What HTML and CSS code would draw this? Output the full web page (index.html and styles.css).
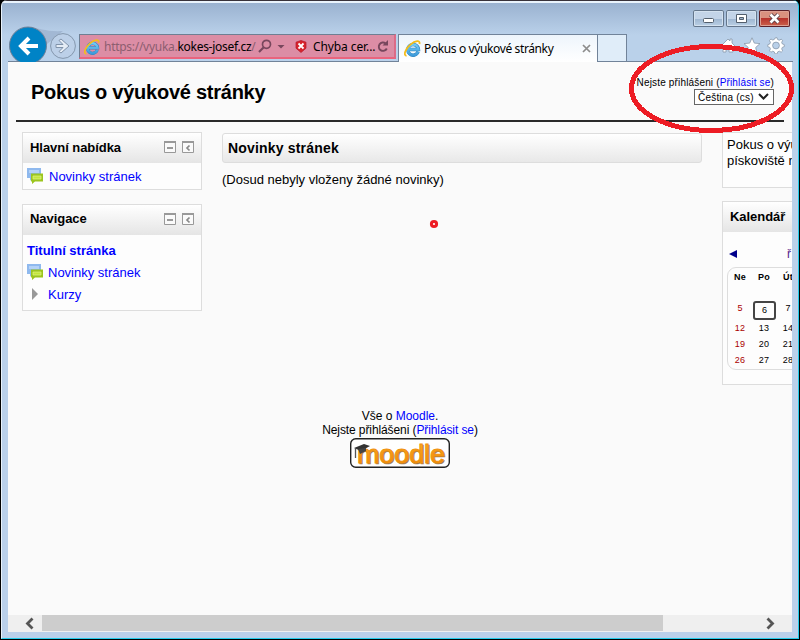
FILE: index.html
```html
<!DOCTYPE html>
<html lang="cs">
<head>
<meta charset="utf-8">
<title>Pokus o výukové stránky</title>
<link rel="stylesheet" href="styles.css">
</head>
<body>
<svg width="0" height="0" class="defs">
  <defs>
    <linearGradient id="eblue" x1="0" y1="0" x2="0" y2="1"><stop offset="0" stop-color="#72cbf5"/><stop offset="1" stop-color="#3d9bdb"/></linearGradient>
    <linearGradient id="orange" x1="0" y1="0" x2="0" y2="1"><stop offset="0" stop-color="#ffb42e"/><stop offset="1" stop-color="#ee8200"/></linearGradient>
    <symbol id="ie" viewBox="0 0 16 16">
      <path d="M13.300 11A5 5 0 1 1 13.600 8.900H4.500" fill="none" stroke="#2f83bd" stroke-width="3.200"/>
      <path d="M13.300 11A5 5 0 1 1 13.600 8.900H4.500" fill="none" stroke="url(#eblue)" stroke-width="2.400"/>
      <path d="M2.400 14.900C-1 14.500 1.200 8.400 6 4.300 10.500.3 15.600-.2 14.500 3.800" fill="none" stroke="#f3bd1c" stroke-width="1.700"/>
    </symbol>
    <symbol id="forum" viewBox="0 0 16 16">
      <path d="M0 0h14v10H5l-2 3v-3H0z" fill="#8fb9ee"/><path d="M2 2h10v3H2z" fill="#b4d2f7"/>
      <path d="M4 5.500h12v8H8l-3 2.500v-2.500H4z" fill="#9cc51e"/><path d="M6 8h8v3H6z" fill="#c3e63c" stroke="#dff28a" stroke-width=".7"/>
    </symbol>
    <symbol id="minus" viewBox="0 0 12 12"><path d="M.5.5h11v11H.5z" fill="#fafafa" stroke="#999"/><path d="M0 0h12v2H0z" fill="#999"/><path d="M3 6h6v2H3z" fill="#999"/></symbol>
    <symbol id="dock" viewBox="0 0 12 12"><path d="M.5.5h11v11H.5z" fill="#fafafa" stroke="#999"/><path d="M0 0h12v2H0z" fill="#999"/><path d="M7.500 4.500 5 7l2.500 2.500" fill="none" stroke="#888" stroke-width="1.700"/></symbol>
  </defs>
</svg>
<div class="window">
  <header class="chrome">
    <div class="nav">
      <svg width="77" height="38" viewBox="0 0 77 38">
        <path d="M28 3C39 4 45 8 62 7L46 20z" fill="#a2b8d4"/>
        <circle cx="27" cy="21.500" r="18.500" fill="#0083c6" stroke="#718096"/>
        <path d="M37 22H20M28 14l-8 8 8 8" fill="none" stroke="#fff" stroke-width="4"/>
        <circle cx="62" cy="22" r="12.400" fill="#bcd0e8" stroke="#8497ad"/>
        <path d="M55 20.500h7l-4-4 2-1.500 8 7-8 7-2-1.500 4-4h-7z" fill="#e5edf6" stroke="#8093aa"/>
      </svg>
    </div>
    <div class="address">
      <svg width="16" height="16"><use href="#ie"/></svg>
      <span class="url ui"><i>https://vyuka.</i>kokes-josef.cz<i>/</i></span>
      <svg class="search" width="28" height="14" viewBox="0 0 28 14"><circle cx="8.500" cy="5.300" r="4" fill="none" stroke="#78475d" stroke-width="1.700"/><path d="M5.500 8.500 1 13" stroke="#78475d" stroke-width="2.200"/><path d="M19.500 6h7L23 9.500z" fill="#78475d"/></svg>
      <svg class="shield" width="12" height="13" viewBox="0 0 12 13"><path d="M1 2.200 6 .5l5 1.700v6L6 12.500 1 8.200z" fill="#d8242c" stroke="#b5172b" stroke-width=".7"/><path d="m3.500 3.500 5 5m0-5-5 5" stroke="#fff" stroke-width="1.800"/></svg>
      <span class="cert ui">Chyba cer...</span>
      <svg width="12" height="13" viewBox="0 0 12 13"><path d="M8.600 3.400A4.200 4.200 0 1 0 9.800 8.500" fill="none" stroke="#78475d" stroke-width="1.900"/><path d="M5.500 5.500H11V0z" fill="#78475d"/></svg>
    </div>
    <div class="tab">
      <svg width="17" height="17"><use href="#ie"/></svg>
      <span class="tabtext ui">Pokus o výukové stránky</span>
      <svg width="9" height="9" viewBox="0 0 9 9"><path d="m1 1 7 7m0-7L1 8" stroke="#8c8c8c" stroke-width="1.700"/></svg>
    </div>
    <div class="newtab"></div>
    <div class="right">
      <div class="winbuttons">
        <svg class="wb" viewBox="0 0 31 17"><rect x="10.500" y="8.500" width="10" height="4" rx="1" fill="#fff" stroke="#525e6c"/></svg>
        <svg class="wb" viewBox="0 0 31 17"><path d="M10.500 4.500h10v8h-10z" fill="#fff" stroke="#525e6c"/><path d="M13.500 7.500h4v2h-4z" fill="#9db2c8" stroke="#525e6c"/></svg>
        <svg class="wb close" viewBox="0 0 31 17"><path d="m11.500 4.500 8 8m0-8-8 8" stroke="#5b4248" stroke-width="4.500"/><path d="m11.500 4.500 8 8m0-8-8 8" stroke="#fff" stroke-width="2.600"/></svg>
      </div>
      <svg class="tools" width="65" height="17" viewBox="0 0 65 17" fill="#fff" stroke="#8898ab" stroke-width=".8">
        <path d="M1 9 8 2l2 2V2h2v4l3 3-1 1-1-1v6H9v-4H6v4H3V9l-1 1z"/>
        <path d="m32 .8 2.300 5.300 5.700.5-4.300 3.900 1.300 5.700-5-3-5 3 1.300-5.700L24 6.600l5.700-.5z"/>
        <path d="m55 1 2-.4.7 2 1.600.6 1.900-1 1.400 1.300-.9 1.900.6 1.500 2 .7v2l-2 .8-.6 1.500.9 1.900-1.400 1.400-1.900-1-1.600.7-.7 2h-2l-.7-2-1.500-.7-1.900 1-1.400-1.400.9-1.900-.6-1.500-2-.7v-2l2-.8.6-1.500-.9-1.900L50.900 2l1.900 1 1.500-.6z"/><circle cx="56" cy="8.500" r="3.400" fill="#b9d0e9"/>
      </svg>
    </div>
  </header>
  <main class="page">
    <div class="pagehead">
      <h1>Pokus o výukové stránky</h1>
      <div class="login">
        <div><span class="status">Nejste přihlášeni (<a>Přihlásit se</a>)</span></div>
        <div class="select"><span>Čeština (cs)</span><svg width="11" height="8" viewBox="0 0 11 8"><path d="m1 1 4.500 4.500L10 1" fill="none" stroke="#222" stroke-width="2"/></svg></div>
      </div>
    </div>
    <div class="columns">
      <div class="col">
        <section class="block">
          <h2><span>Hlavní nabídka</span><svg class="ic" width="12" height="12"><use href="#minus"/></svg><svg class="ic" width="12" height="12"><use href="#dock"/></svg></h2>
          <div class="row first"><svg width="16" height="16"><use href="#forum"/></svg><a>Novinky stránek</a></div>
        </section>
        <section class="block navi">
          <h2><span>Navigace</span><svg class="ic" width="12" height="12"><use href="#minus"/></svg><svg class="ic" width="12" height="12"><use href="#dock"/></svg></h2>
          <div class="row"><a><b>Titulní stránka</b></a></div>
          <div class="row"><svg width="16" height="16"><use href="#forum"/></svg><a>Novinky stránek</a></div>
          <div class="row"><svg width="16" height="16" viewBox="0 0 16 16"><path d="M5 2v12l6-6z" fill="#999"/></svg><a>Kurzy</a></div>
        </section>
      </div>
      <div class="center">
        <h2 class="news">Novinky stránek</h2>
        <p>(Dosud nebyly vloženy žádné novinky)</p>
      </div>
      <div class="col">
        <section class="block about"><span>Pokus o výu</span><br><span>pískoviště n</span></section>
        <section class="block calendar">
          <h2><span>Kalendář</span></h2>
          <div class="month"><svg width="8" height="8" viewBox="0 0 8 8"><path d="M8 0v8L0 4z" fill="#00008b"/></svg><a>ř</a></div>
          <div class="days">
            <b>Ne</b><b>Po</b><b>Út</b>
            <i>5</i><span class="today">6</span><span>7</span>
            <i>12</i><span>13</span><span>14</span>
            <i>19</i><span>20</span><span>21</span>
            <i>26</i><span>27</span><span>28</span>
          </div>
        </section>
      </div>
    </div>
    <footer class="foot">
      <div>Vše o <a>Moodle</a>.</div>
      <div class="again">Nejste přihlášeni (<a>Přihlásit se</a>)</div>
      <svg width="100" height="30" viewBox="0 0 100 30">
        <rect x=".7" y=".7" width="98.600" height="28.600" rx="5" fill="#fff" stroke="#222" stroke-width="1.400"/>
        <text class="logo shade" x="8" y="25.500" textLength="88" lengthAdjust="spacingAndGlyphs">moodle</text>
        <text class="logo" x="7" y="24.500" textLength="88" lengthAdjust="spacingAndGlyphs">moodle</text>
        <path d="m4 10 10-4 6 2-9 5z" fill="#333"/><path d="m8 11 8-1v3l-6 3z" fill="#444"/><path d="M5.500 10v10" stroke="#555" stroke-width="1.300"/>
      </svg>
    </footer>
    <div class="scroll">
      <svg width="34" height="17" viewBox="0 0 34 17"><path d="m24.500 3.500-5 5 5 5" fill="none" stroke="#555" stroke-width="2.800"/></svg>
      <div class="thumb"></div>
      <svg class="next" width="34" height="17" viewBox="0 0 34 17"><path d="m9.500 3.500 5 5-5 5" fill="none" stroke="#555" stroke-width="2.800"/></svg>
    </div>
  </main>
</div>
<svg class="marks" width="800" height="640">
  <ellipse cx="711.500" cy="88.500" rx="80" ry="42" fill="none" stroke="#ed1c24" stroke-width="5" shape-rendering="crispEdges"/>
  <circle cx="434" cy="224" r="2.600" fill="#fff" stroke="#ed1c24" stroke-width="3"/>
</svg>
</body>
</html>
```
FILE: styles.css
```css
* { box-sizing: border-box; }
body { margin: 0; width: 800px; height: 640px; overflow: hidden; background: #000; color: #000; font: 13px/16px "Liberation Sans", Arial, sans-serif; }
svg { display: block; flex: none; }
.defs { position: absolute; }
i { font-style: normal; }
a { color: #00f; }
h1, h2, p { margin: 0; }
span, a { white-space: nowrap; }
.ui { font: 12px/16px "Noto Sans", "Open Sans", sans-serif; }

.window { width: 798px; height: 639px; padding: 0 5px 0 6px; margin-left: 1px; border: solid #24cbea; border-width: 0 1px 1px 0; border-left: 1px solid #e8f2fb; border-radius: 6px 6px 0 0; background: linear-gradient(#38323a 0 1px, #e9f3fc 1px 3px, #9ab2d0 3px, #bad1ea 35px, #bad0ea); }
.chrome { display: flex; align-items: flex-start; height: 62px; padding-top: 24px; border-bottom: 1px solid #718399; }
.nav { width: 71px; height: 37px; }
.nav svg { margin-left: -7px; }
.address { display: flex; align-items: center; width: 317px; height: 25px; margin-top: 10px; padding: 0 5px 0 4px; border: 1px solid #6f7f93; border-right: 2px solid #dc6b87; border-bottom: 2px solid #e9647d; background: #dc8da5; }
.address > svg:first-child { margin-top: 1px; }
.url { width: 152px; margin: 1px 0 0 4px; letter-spacing: -.28px; }
.url i { color: #8c5e70; }
.search { margin-left: 2px; }
.shield { margin-left: 9px; }
.cert { width: 64px; margin: 1px 0 0 6px; letter-spacing: -.1px; }
.tab { display: flex; align-items: center; width: 200px; height: 28px; margin: 10px 0 0 2px; padding: 0 6px 0 5px; border: 1px solid #718399; border-bottom: 0; background: linear-gradient(#eef5fc, #fff); }
.tabtext { width: 158px; margin-left: 3px; letter-spacing: -.38px; }
.newtab { width: 29px; height: 27px; margin-top: 10px; border: 1px solid #718399; border-left: 0; border-bottom: 0; background: #e0edf9; }
.right { width: 164px; height: 36px; margin-top: -14px; padding-left: 66px; }
.winbuttons { display: flex; gap: 2px; }
.wb { width: 31px; height: 17px; border-radius: 2px; box-shadow: inset 0 0 0 1px #64768c, inset 0 0 0 2px #d4e2f0; background: linear-gradient(#c3d4e8 50%, #9db5d0 50%, #bed3e8); }
.close { box-shadow: inset 0 0 0 1px #5a2029, inset 0 0 0 2px #dda092; background: linear-gradient(#d9917f 45%, #b7332c 50%, #cd674f); }
.tools { margin: 10px 0 0 27px; }

.page { display: flex; flex-direction: column; width: 784px; height: 570px; background: #fafafa; overflow: hidden; }
.pagehead { display: flex; justify-content: space-between; flex: none; height: 60px; margin: 0 8px; padding: 0 10px 0 15px; border-bottom: 2px solid #2a2a2a; }
h1 { font-size: 20px; line-height: 24px; padding-top: 18px; letter-spacing: -.25px; }
.login { display: flex; flex-direction: column; align-items: flex-end; padding-top: 14px; font-size: 10px; line-height: 13px; }
.status { letter-spacing: .16px; }
.select { display: flex; align-items: center; justify-content: space-between; width: 80px; height: 16px; padding: 0 4px 0 3px; border: 1px solid #666; background: #fff; letter-spacing: .2px; }
.columns { display: grid; grid-template-columns: 180px 480px 180px; gap: 20px; flex: none; height: 263px; width: 900px; padding: 10px 0 0 14px; }
.block { border: 1px solid #ddd; background: #fdfdfd; }
.block h2 { display: flex; align-items: center; height: 30px; padding: 0 7px; font-size: 13px; line-height: 16px; letter-spacing: -.05px; background: linear-gradient(#fff, #e5e5e5); }
.block h2 span { margin: -1px auto 0 0; }
.ic { margin: -2px 0 0 6px; }
.row { display: flex; align-items: center; gap: 5px; height: 22px; padding-left: 4px; }
.row a { padding-top: 1px; }
.row.first { height: 26px; gap: 6px; }
.navi { height: 107px; margin-top: 14px; }
.navi h2 { margin-bottom: 4px; }
.navi h2 span { margin-top: -2px; }
.news { height: 30px; margin-top: 1px; padding: 6px 5px; border: 1px solid #ddd; border-radius: 3px; font-size: 14px; line-height: 16px; letter-spacing: .18px; background: linear-gradient(#fff, #e8e8e8); }
.center p { margin-top: 9px; }
.about { height: 56px; padding: 4px; }
.calendar { height: 184px; margin-top: 13px; }
.month { display: flex; align-items: center; gap: 50px; height: 35px; padding: 9px 0 0 6px; font-size: 12px; }
.month a { color: #551a8b; }
.days { display: grid; grid-template-columns: 24px 24px 24px; grid-template-rows: 36px 16px 16px 16px 16px; width: 170px; height: 103px; margin-left: 4px; border: 1px solid #ddd; border-radius: 9px; text-align: center; font-size: 9px; line-height: 16px; letter-spacing: .2px; }
.days b { line-height: 18px; }
.days i { color: #a00; }
.days > :nth-child(n+4):nth-child(-n+6) { margin-top: -4px; }
.days .today { width: 23px; height: 19px; margin-left: 1px; border: 2px solid #444; border-radius: 3px; line-height: 15px; }
.days .today:nth-child(5) { margin-top: -3px; }

.foot { display: flex; flex-direction: column; align-items: center; margin-top: 24px; font-size: 12px; line-height: 14px; }
.foot svg { margin-top: 1px; }
.again { letter-spacing: -.1px; }
.logo { font: 25px "Liberation Sans", Arial, sans-serif; fill: url(#orange); stroke: #f0920f; stroke-width: .9px; }
.shade { fill: #8f6a35; stroke: #a5875a; stroke-width: .7px; }
.scroll { display: flex; height: 17px; margin-top: auto; background: #efefef; }
.thumb { width: 621px; height: 16px; background: #cdcdcd; }
.next { margin-left: auto; }
.marks { position: absolute; left: 0; top: 0; }
```
